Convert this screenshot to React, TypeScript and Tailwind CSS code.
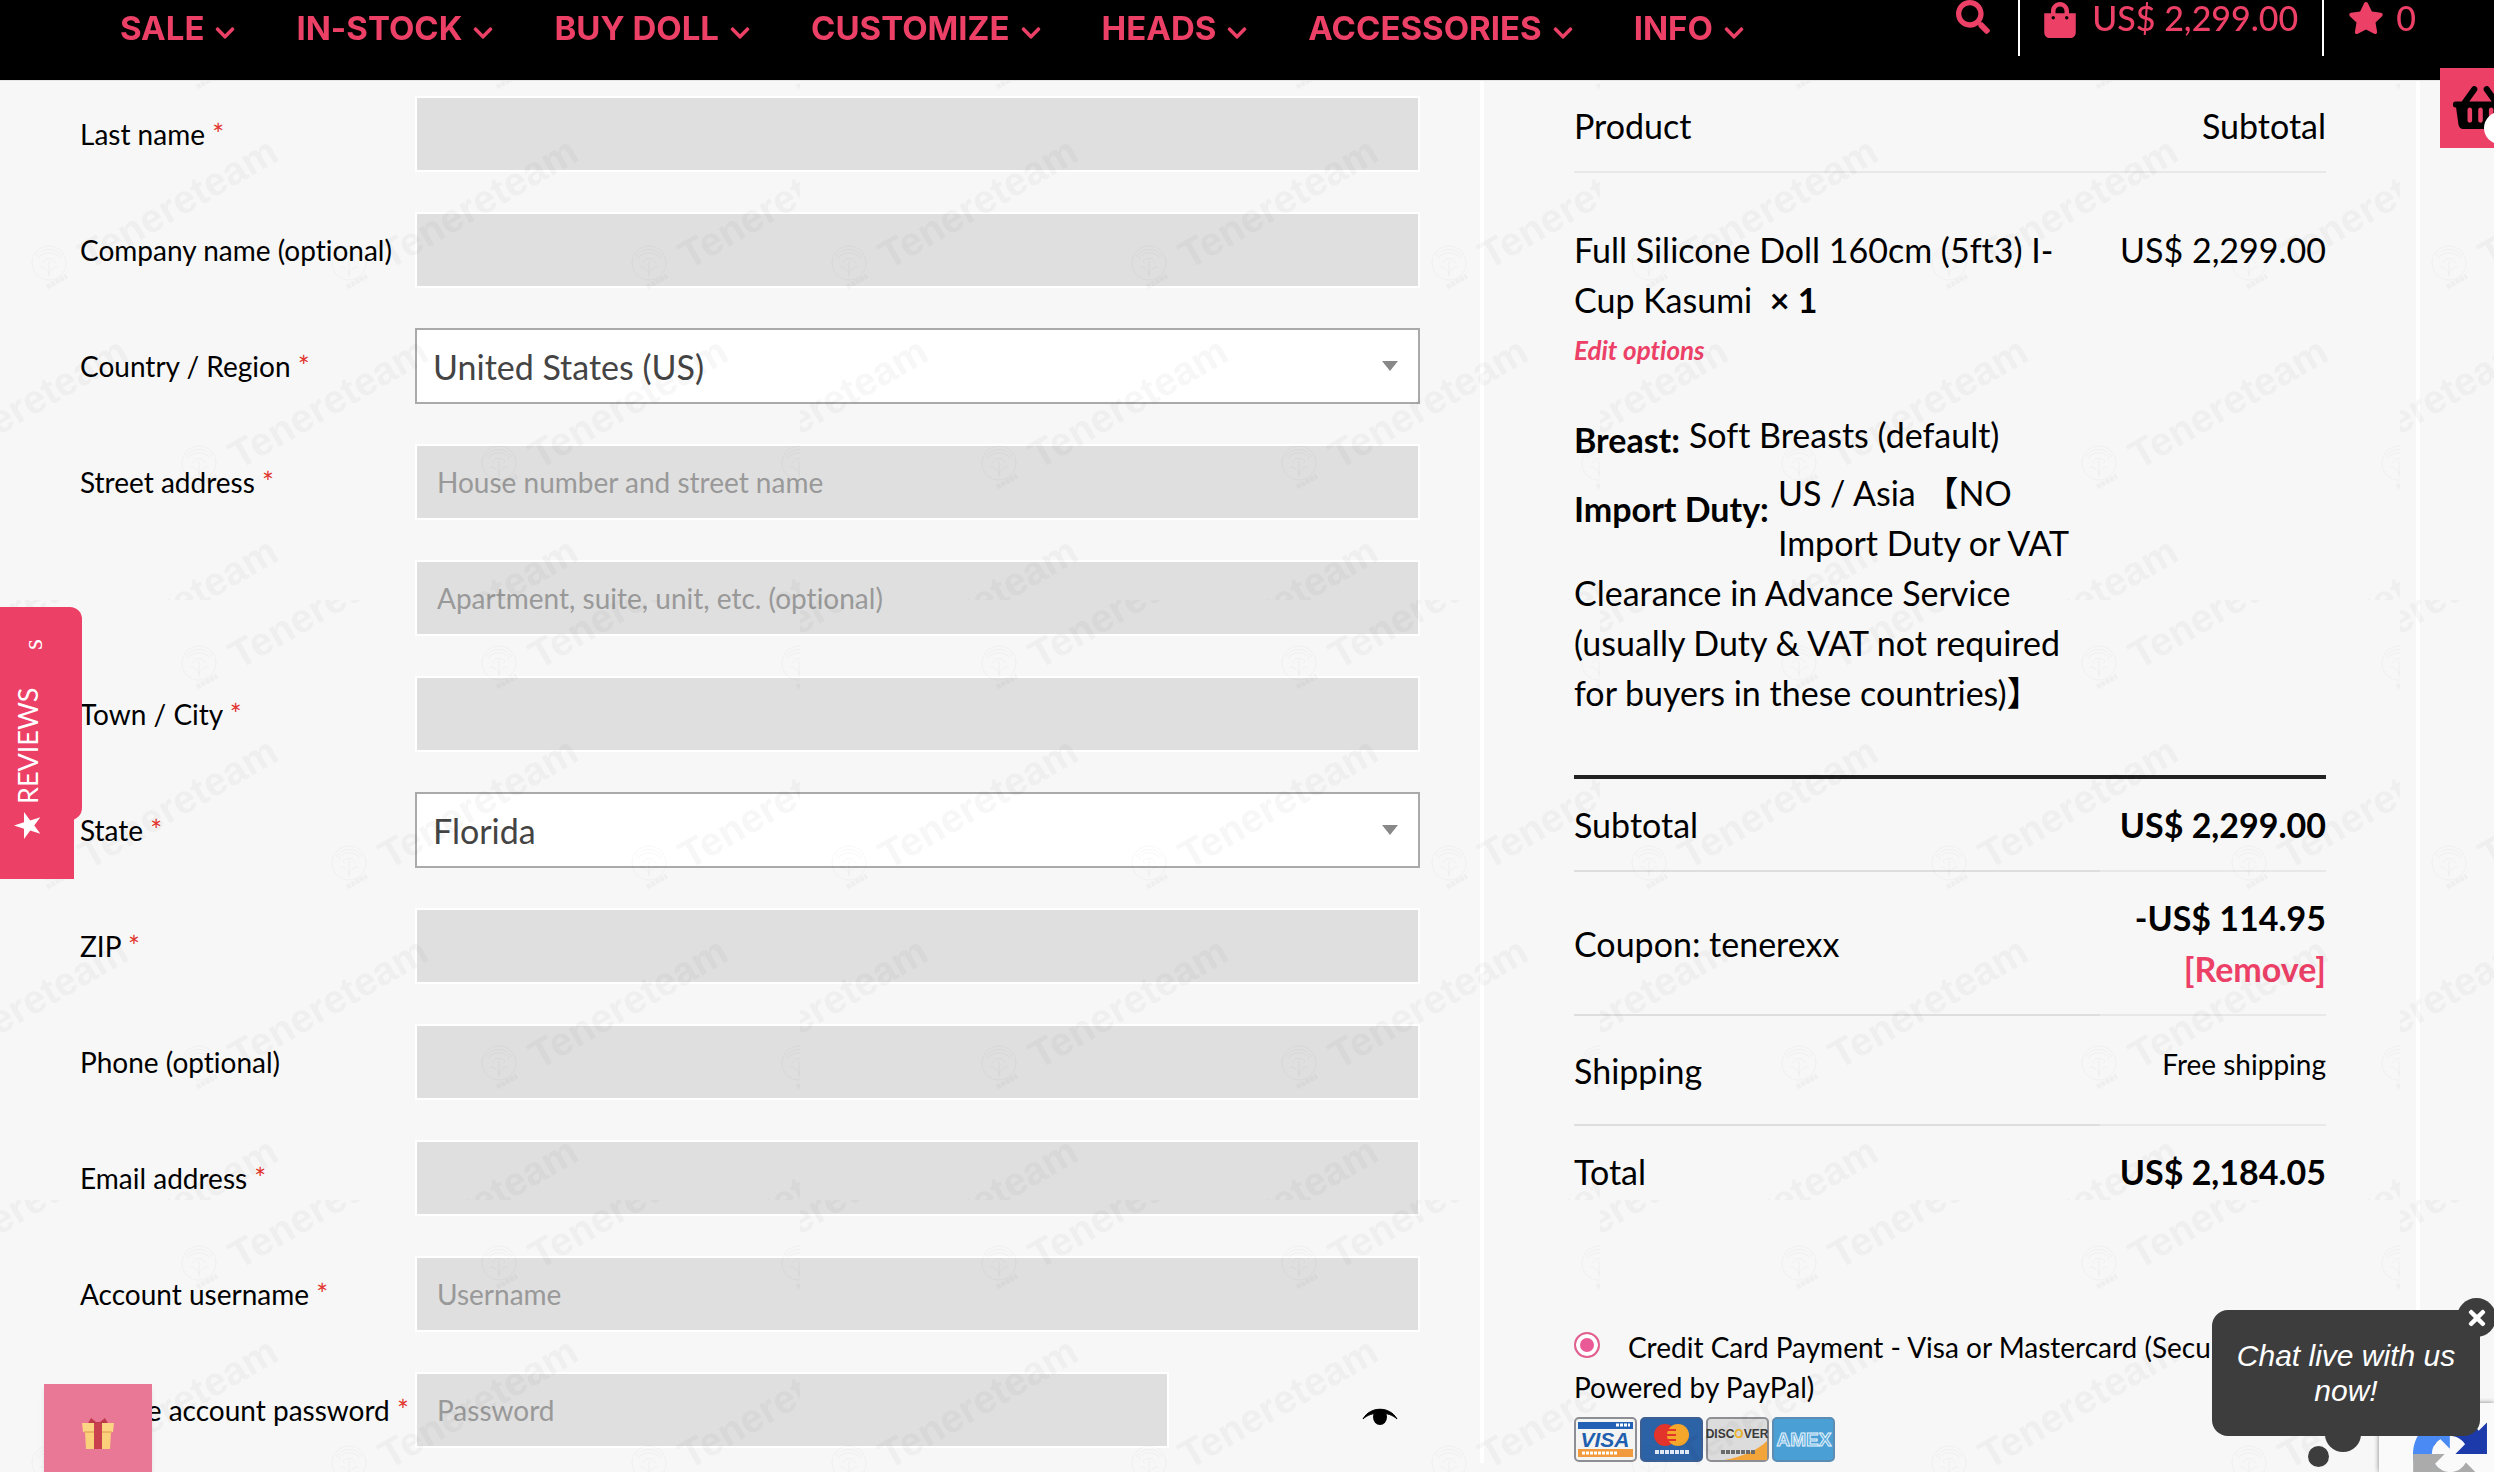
import { useState } from "react";
import {
    FaChevronDown,
    FaSearch,
    FaShoppingBag,
    FaShoppingBasket,
    FaStar,
    FaTimes,
} from "react-icons/fa";

const navItems = ["SALE", "IN-STOCK", "BUY DOLL", "CUSTOMIZE", "HEADS", "ACCESSORIES", "INFO"];

interface Field {
    id: string;
    label: string;
    required?: boolean;
    placeholder?: string;
    type?: string;
    options?: string[];
}

const fields: Field[] = [
    { id: "last-name", label: "Last name", required: true },
    { id: "company", label: "Company name (optional)" },
    { id: "country", label: "Country / Region", required: true, options: ["United States (US)"] },
    { id: "street", label: "Street address", required: true, placeholder: "House number and street name" },
    { id: "street-2", label: "", placeholder: "Apartment, suite, unit, etc. (optional)" },
    { id: "city", label: "Town / City", required: true },
    { id: "state", label: "State", required: true, options: ["Florida"] },
    { id: "zip", label: "ZIP", required: true },
    { id: "phone", label: "Phone (optional)", type: "tel" },
    { id: "email", label: "Email address", required: true, type: "email" },
    { id: "username", label: "Account username", required: true, placeholder: "Username" },
    { id: "password", label: "Create account password", required: true, placeholder: "Password", type: "password" },
];

function Header() {
    return (
        <header className="sticky top-0 z-10 flex h-20 items-start justify-between bg-black pr-[78px] pl-[120px] text-[#ec4067] shadow-[0_1px_0_#e5e5e5]">
            <nav className="flex h-[58px] items-center gap-[60px] font-[Inter,sans-serif] text-[33px] font-bold">
                {navItems.map((item) => (
                    <a key={item} href="#" className="flex items-center gap-[10px] whitespace-nowrap">
                        {item}
                        <FaChevronDown className="mt-2 size-[22px]" />
                    </a>
                ))}
            </nav>
            <div className="flex h-14 items-start text-[34px] leading-9 font-medium">
                <button type="button" aria-label="Search" className="mr-7">
                    <FaSearch className="size-[34px]" />
                </button>
                <a href="#" className="flex h-14 gap-4 border-l-2 border-white px-6">
                    <FaShoppingBag className="mt-[2px] h-9 w-8" />
                    <span>US$ 2,299.00</span>
                </a>
                <a href="#" className="flex h-14 gap-3 border-l-2 border-white pl-6">
                    <FaStar className="size-9" />
                    <span>0</span>
                </a>
            </div>
        </header>
    );
}

function EyeIcon() {
    return (
        <svg viewBox="0 0 36 24" className="h-6 w-9">
            <path d="M1 13C8 0 28 0 35 13C27 5 9 5 1 13Z" stroke="#000" strokeWidth="1" />
            <ellipse cx="18" cy="11" rx="7" ry="8" />
        </svg>
    );
}

function FieldRow({ field }: { field: Field }) {
    const [showPassword, setShowPassword] = useState(false);
    const isPassword = field.type === "password";

    return (
        <div className="flex items-center">
            <label htmlFor={field.id} className="w-[335px] shrink-0 text-[28px] whitespace-nowrap">
                {field.label}
                {field.required && <span className="text-[#e2332c]"> *</span>}
            </label>
            {field.options ? (
                <div className="relative flex-1">
                    <select
                        id={field.id}
                        className="h-[76px] w-full appearance-none border-2 border-[#aaa] bg-white px-4 text-[34px] text-[#444]"
                    >
                        {field.options.map((option) => (
                            <option key={option}>{option}</option>
                        ))}
                    </select>
                    <svg viewBox="0 0 16 10" className="pointer-events-none absolute top-[33px] right-[22px] h-[10px] w-4">
                        <path d="M0 0H16L8 10Z" fill="#888" />
                    </svg>
                </div>
            ) : (
                <div className="flex flex-1 items-center justify-between">
                    <input
                        id={field.id}
                        type={isPassword && showPassword ? "text" : field.type ?? "text"}
                        placeholder={field.placeholder}
                        aria-label={field.label ? undefined : field.placeholder}
                        className={`h-[76px] border-2 border-white bg-[#dfdfdf] px-5 text-[28px] placeholder:text-[#999] ${
                            isPassword ? "w-3/4" : "w-full"
                        }`}
                    />
                    {isPassword && (
                        <button
                            type="button"
                            aria-label="Show password"
                            className="mt-4 mr-[22px]"
                            onClick={() => setShowPassword(!showPassword)}
                        >
                            <EyeIcon />
                        </button>
                    )}
                </div>
            )}
        </div>
    );
}

function OrderTable() {
    return (
        <table className="w-full text-[34px] leading-[51px]">
            <thead>
                <tr className="border-b-2 border-[#e8e8e8]">
                    <th className="w-[70%] py-5 text-left font-normal">Product</th>
                    <th className="py-5 text-right font-normal">Subtotal</th>
                </tr>
            </thead>
            <tbody>
                <tr className="border-b-4 border-[#222] align-top leading-[50px]">
                    <td className="pt-[52px] pr-6 pb-[57px]">
                        Full Silicone Doll 160cm (5ft3) I-Cup Kasumi&nbsp; <strong>× 1</strong>
                        <a href="#" className="block text-[26px] font-bold text-[#ec4067] italic">
                            Edit options
                        </a>
                        <dl className="mt-[35px]">
                            <dt className="float-left clear-left mt-[5px] mr-[9px] mb-[14px] font-bold">Breast:</dt>
                            <dd className="mb-2">Soft Breasts (default)</dd>
                            <dt className="float-left clear-left mt-[5px] mr-[9px] mb-[14px] font-bold">Import Duty:</dt>
                            <dd>
                                US / Asia 【NO Import Duty or VAT Clearance in Advance Service (usually Duty &amp; VAT not
                                required for buyers in these countries)】
                            </dd>
                        </dl>
                    </td>
                    <td className="pt-[52px] text-right">US$ 2,299.00</td>
                </tr>
            </tbody>
            <tfoot>
                <tr>
                    <th className="border-b-2 border-[#dedede] py-5 text-left font-normal">Subtotal</th>
                    <td className="border-b-2 border-[#e8e8e8] py-5 text-right font-bold">US$ 2,299.00</td>
                </tr>
                <tr>
                    <th className="border-b-2 border-[#dedede] py-5 text-left font-normal">Coupon: tenerexx</th>
                    <td className="border-b-2 border-[#e8e8e8] py-5 text-right font-bold">
                        -US$ 114.95
                        <br />
                        <a href="#" className="text-[#ec4067]">[Remove]</a>
                    </td>
                </tr>
                <tr className="h-[110px]">
                    <th className="border-b-2 border-[#dedede] text-left font-normal">Shipping</th>
                    <td className="border-b-2 border-[#e8e8e8] pb-3 text-right text-[28px]">Free shipping</td>
                </tr>
                <tr>
                    <th className="py-5 text-left font-normal">Total</th>
                    <td className="py-5 text-right font-bold">US$ 2,184.05</td>
                </tr>
            </tfoot>
        </table>
    );
}

function CardLogos() {
    return (
        <svg
            viewBox="0 0 262 46"
            className="mt-[10px] h-[46px] w-[262px]"
            fontFamily="Liberation Sans, sans-serif"
            fontWeight="bold"
        >
            <rect x="1" y="1" width="61" height="43" rx="4" fill="#f4f4f2" stroke="#8d8f94" strokeWidth="2" />
            <rect x="4" y="5" width="55" height="7" fill="#2160b4" />
            <rect x="4" y="32" width="55" height="8" fill="#f19a3e" />
            <text x="31" y="30" fontSize="21" fontStyle="italic" textAnchor="middle" fill="#1f5fae">VISA</text>
            <path d="M42 8h14M8 36h36" stroke="#fff" strokeWidth="3" strokeDasharray="3 1" />
            <rect x="67" y="1" width="61" height="43" rx="4" fill="#2c62a6" stroke="#3c5f93" strokeWidth="2" />
            <circle cx="91" cy="18" r="11" fill="#e3342b" />
            <circle cx="104" cy="18" r="11" fill="#f5a72c" />
            <path d="M93 13h9M93 18h9M93 23h9" stroke="#e3342b" strokeWidth="2" />
            <path d="M81 35h34" stroke="#dfe8f4" strokeWidth="4" strokeDasharray="4 1" />
            <rect x="133" y="1" width="61" height="43" rx="4" fill="#dcdcdc" stroke="#8d8f94" strokeWidth="2" />
            <path d="M150 43C168 40 184 33 193 24V43Z" fill="#f3a53a" />
            <text x="163" y="21" fontSize="12" textAnchor="middle" fill="#3a3a3a">
                DISC<tspan fill="#f0b429">O</tspan>VER
            </text>
            <path d="M147 35h34" stroke="#6b6b6b" strokeWidth="4" strokeDasharray="4 1" />
            <rect x="199" y="1" width="61" height="43" rx="4" fill="#4a9fd4" stroke="#5b8db4" strokeWidth="2" />
            <text x="230" y="29" fontSize="19" textAnchor="middle" fill="#5aaade" stroke="#e6f3fb" strokeWidth="1">AMEX</text>
        </svg>
    );
}

function Payment() {
    return (
        <div className="mt-[110px] text-[28px] leading-10">
            <input
                id="pay-card"
                type="radio"
                name="payment"
                defaultChecked
                className="mr-7 size-[26px] appearance-none rounded-full border-2 border-[#e0608f] bg-[#ea5a97] ring-4 ring-white ring-inset"
            />
            <label htmlFor="pay-card">Credit Card Payment - Visa or Mastercard (Secure, Powered by PayPal)</label>
            <CardLogos />
        </div>
    );
}

function Mark({ x, y }: { x: number; y: number }) {
    return (
        <g transform={`translate(${x} ${y})`}>
            <g fill="none" stroke="#000" strokeWidth="1">
                <circle r="17" />
                <path d="M0 14V-2M-9 4C-4 4 0 8 0 12M9 4C4 4 0 8 0 12M-10-4C-10-12 10-12 10-4M-6 0C-6-6 6-6 6 0M-13-6C-8-16 8-16 13-6" />
                <path d="M-2 24L18 13" strokeWidth="5" strokeDasharray="4 1" />
            </g>
            <text transform="translate(40 7) rotate(-30)" fontSize="40">
                Tenereteam
            </text>
        </g>
    );
}

// staggered rows, cut off where each 800x600 tile ends
const marks = [
    [-101, 63], [199, 63], [499, 63], [799, 63],
    [49, 263], [349, 263], [649, 263],
    [-101, 463], [199, 463], [499, 463], [799, 463],
    [49, 663], [349, 663], [649, 663],
];

function Watermark() {
    return (
        <svg
            aria-hidden="true"
            className="pointer-events-none fixed inset-0 z-[5] size-full opacity-[0.03]"
            fontFamily="Liberation Sans, sans-serif"
            fontWeight="bold"
        >
            <defs>
                <pattern id="marks" width="800" height="600" patternUnits="userSpaceOnUse">
                    {marks.map(([x, y]) => (
                        <Mark key={`${x}-${y}`} x={x} y={y} />
                    ))}
                </pattern>
            </defs>
            <rect width="100%" height="100%" fill="url(#marks)" />
        </svg>
    );
}

function ReviewsTab() {
    return (
        <>
            <div className="fixed top-[607px] left-0 z-20 h-[213px] w-[82px] rounded-r-xl bg-[#ec4067] text-white">
                <span className="absolute top-8 left-3 rotate-180 font-['Liberation_Serif',serif] text-[28px] [writing-mode:vertical-rl]">
                    s
                </span>
            </div>
            <button
                type="button"
                className="fixed top-[680px] left-0 z-20 flex h-[199px] w-[74px] rotate-180 items-center bg-[#ec4067] pt-10 pl-[18px] text-[27px] text-white [writing-mode:vertical-rl]"
            >
                <svg viewBox="0 0 24 24" className="mb-2 size-[27px] shrink-0 rotate-90">
                    <path d="M12 0l2.900 8.900H24l-7.500 5.500 2.900 9L12 18l-7.400 5.400 2.900-9L0 8.900h9.100z" fill="#fff" />
                </svg>
                REVIEWS
            </button>
        </>
    );
}

function GiftButton() {
    return (
        <button
            type="button"
            aria-label="Gift"
            className="fixed bottom-0 left-11 z-20 flex h-[88px] w-[108px] justify-center bg-[#e87896] pt-[34px] shadow-md"
        >
            <svg viewBox="0 0 34 32" className="h-8 w-[34px]">
                <path d="M6 7L10 0L15 4H19L24 0L28 7Z" fill="#c0394b" />
                <path d="M1 5H33L32 14H2Z" fill="#fbd583" />
                <path d="M4 14H30L29 31H5Z" fill="#fbd07a" />
                <path d="M3 14H31" stroke="#e8a95c" strokeWidth="1.5" />
                <path d="M13 5H21V31H13Z" fill="#c8414c" />
            </svg>
        </button>
    );
}

function CartTab() {
    return (
        <button
            type="button"
            aria-label="Cart"
            className="fixed top-[68px] right-0 z-20 h-20 w-[54px] overflow-hidden bg-[#ec4067] text-black"
        >
            <FaShoppingBasket className="absolute top-[15px] left-[13px] h-[49px] w-[55px]" />
            <span className="absolute top-11 left-11 size-8 rounded-full bg-white" />
        </button>
    );
}

function Recaptcha() {
    return (
        <div className="fixed right-0 bottom-0 z-20 h-[69px] w-[115px] overflow-hidden bg-[#fafafa] shadow-[0_0_5px_#808080]">
            <svg viewBox="0 0 64 64" className="absolute top-[14px] left-[34px] size-[74px]">
                <path
                    fill="#1c3aa9"
                    d="M64 31.955l-.033-1.370V4.687l-7.160 7.160C50.948 4.674 42.033.093 32.050.093c-10.400 0-19.622 4.960-25.458 12.640l11.736 11.860a15.550 15.550 0 0 1 4.754-5.334c2.050-1.600 4.952-2.906 8.968-2.906.485 0 .860.057 1.135.163 4.976.393 9.288 3.140 11.828 7.124l-8.307 8.307L64 31.953"
                />
                <path
                    fill="#4a8af4"
                    d="M31.862.094l-1.370.033H4.594l7.160 7.160C4.580 13.147 0 22.060 0 32.046c0 10.400 4.960 19.622 12.640 25.458L24.500 45.768a15.550 15.550 0 0 1-5.334-4.754c-1.600-2.050-2.906-4.952-2.906-8.968 0-.485.057-.860.163-1.135.393-4.976 3.140-9.288 7.124-11.828l8.307 8.307L31.860.095"
                />
                <path
                    fill="#ababab"
                    d="M.095 32.045l.033 1.370v25.898l7.160-7.160c5.860 7.173 14.774 11.754 24.760 11.754 10.400 0 19.622-4.960 25.458-12.640l-11.736-11.860a15.550 15.550 0 0 1-4.754 5.334c-2.050 1.600-4.952 2.906-8.968 2.906-.485 0-.860-.057-1.135-.163-4.976-.393-9.288-3.140-11.828-7.124l8.307-8.307c-10.522.040-22.400.066-27.295-.005"
                />
            </svg>
        </div>
    );
}

function ChatBubble() {
    return (
        <div className="fixed right-[14px] bottom-9 z-30 w-[268px]">
            <span className="absolute -bottom-4 left-[113px] size-9 rounded-full bg-[#3d3d3d]" />
            <span className="absolute -bottom-[31px] left-24 size-[21px] rounded-full bg-[#3d3d3d]" />
            <button
                type="button"
                aria-label="Close chat"
                className="absolute -top-3 -right-4 flex size-[39px] items-center justify-center rounded-full bg-[#3d3d3d] text-white"
            >
                <FaTimes className="size-6" />
            </button>
            <p className="rounded-2xl bg-[#3d3d3d] px-5 py-7 text-center font-['Liberation_Sans',Arial,sans-serif] text-[30px] leading-[35px] text-white italic">
                Chat live with us now!
            </p>
        </div>
    );
}

export default function App() {
    return (
        <div className="min-h-screen bg-[#f7f7f7] font-[Lato,'Noto_Sans_CJK_SC',sans-serif] text-black [font-variant-ligatures:none]">
            <Header />
            <main className="grid grid-cols-[67fr_47fr] gap-[60px] pr-[74px] pl-20">
                <form className="flex flex-col gap-10 pt-4">
                    {fields.map((field) => (
                        <FieldRow key={field.id} field={field} />
                    ))}
                </form>
                <section className="border-x-4 border-white px-[90px]">
                    <OrderTable />
                    <Payment />
                </section>
            </main>
            <Watermark />
            <ReviewsTab />
            <GiftButton />
            <CartTab />
            <Recaptcha />
            <ChatBubble />
        </div>
    );
}
